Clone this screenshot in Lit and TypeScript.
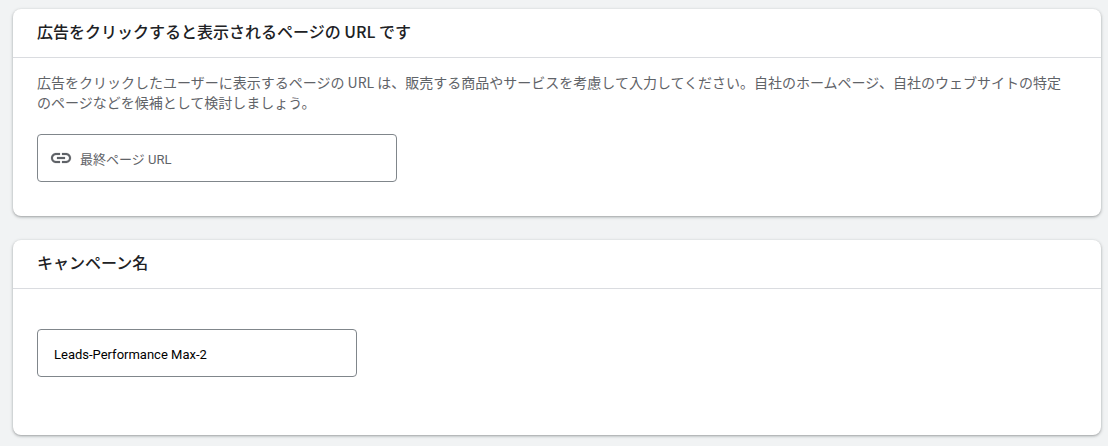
import { LitElement, html, css } from "lit";
import { customElement, state } from "lit/decorators.js";

@customElement("app-root")
export class AppRoot extends LitElement {
  static styles = css`
    :host {
      display: block;
      box-sizing: border-box;
      min-height: 100vh;
      padding: 9px 7px 11px 13px;
      background: #f1f3f4;
      color: #202124;
      font-family: "Noto Sans CJK JP", sans-serif;
    }
    .cards {
      display: flex;
      flex-direction: column;
      gap: 24px;
    }
    .card {
      background: #fff;
      border-radius: 8px;
      box-shadow: 0 1px 2px rgba(60, 64, 67, 0.3), 0 1px 3px 1px rgba(60, 64, 67, 0.15);
    }
    .title {
      margin: 0;
      padding: 10px 24px 14px;
      border-bottom: 1px solid #dadce0;
      font-size: 16px;
      line-height: 24px;
      font-weight: 500;
    }
    .body {
      padding: 14px 24px 34px;
    }
    .body.spacious {
      padding: 40px 24px 58px;
    }
    .hint {
      margin: 0 0 22px;
      padding-right: 8px;
      color: #5f6368;
      font-size: 14px;
      line-height: 20px;
    }
    .field {
      display: flex;
      align-items: center;
      gap: 7px;
      box-sizing: border-box;
      height: 48px;
      max-width: 360px;
      padding: 0 11px;
      border: 1px solid #80868b;
      border-radius: 4px;
    }
    .field.narrow {
      max-width: 320px;
      padding: 0 16px;
    }
    .icon {
      flex: none;
      width: 24px;
      height: 24px;
      fill: #5f6368;
      stroke: #5f6368;
      stroke-width: 0.2;
    }
    .input {
      flex: 1;
      min-width: 0;
      padding: 4px 0 0;
      border: 0;
      outline: 0;
      background: none;
      color: #000;
      font-family: Roboto, "Noto Sans CJK JP", sans-serif;
      font-size: 13px;
      line-height: 20px;
    }
    .input::placeholder {
      color: #5f6368;
      opacity: 1;
    }
  `;

  @state() private url = "";
  @state() private campaignName = "Leads-Performance Max-2";

  render() {
    return html`
      <main class="cards" lang="ja">
        <section class="card">
          <h2 class="title" id="url-title">広告をクリックすると表示されるページの URL です</h2>
          <div class="body">
            <p class="hint">
              広告をクリックしたユーザーに表示するページの URL は、販売する商品やサービスを考慮して入力してください。自社のホームページ、自社のウェブサイトの特定のページなどを候補として検討しましょう。
            </p>
            <label class="field">
              <svg class="icon" viewBox="0 0 24 24" aria-hidden="true">
                <path d="M3.9 12c0-1.71 1.39-3.1 3.1-3.1h4V7H7c-2.76 0-5 2.24-5 5s2.24 5 5 5h4v-1.9H7c-1.71 0-3.1-1.39-3.1-3.1zM8 13h8v-2H8v2zm9-6h-4v1.9h4c1.71 0 3.1 1.39 3.1 3.1s-1.39 3.1-3.1 3.1h-4V17h4c2.76 0 5-2.24 5-5s-2.24-5-5-5z" />
              </svg>
              <input
                class="input"
                type="url"
                placeholder="最終ページ URL"
                aria-labelledby="url-title"
                .value=${this.url}
                @input=${(e: Event) => (this.url = (e.target as HTMLInputElement).value)}
              />
            </label>
          </div>
        </section>
        <section class="card">
          <h2 class="title" id="name-title">キャンペーン名</h2>
          <div class="body spacious">
            <label class="field narrow">
              <input
                class="input"
                type="text"
                aria-labelledby="name-title"
                .value=${this.campaignName}
                @input=${(e: Event) => (this.campaignName = (e.target as HTMLInputElement).value)}
              />
            </label>
          </div>
        </section>
      </main>
    `;
  }
}
